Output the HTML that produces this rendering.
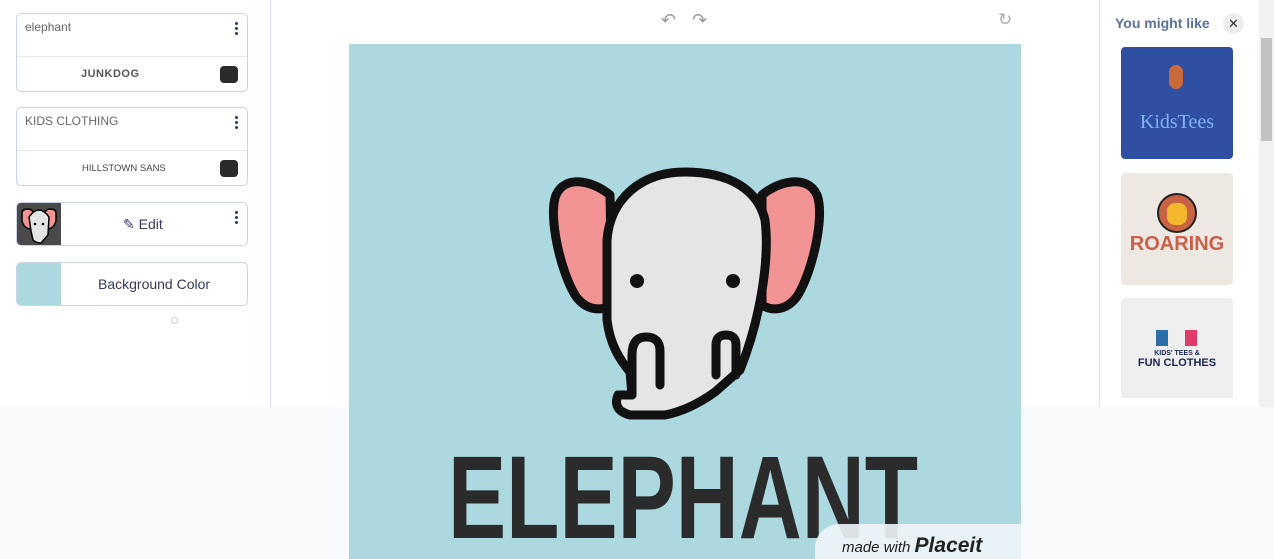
<!DOCTYPE html>
<html><head><style>
*{margin:0;padding:0;box-sizing:border-box}
body{width:1274px;height:559px;overflow:hidden;background:#f8f9fa;font-family:"Liberation Sans",sans-serif;position:relative}
.left{position:absolute;left:0;top:0;width:271px;height:407px;background:#fff;border-right:1px solid #dde3ee}
.card{position:absolute;left:16px;width:232px;border:1px solid #c9d3e3;border-radius:5px;background:#fff}
.dots{position:absolute;right:9px;top:8px;width:3px}
.dots i{display:block;width:3px;height:3px;border-radius:50%;background:#2c3a5a;margin-bottom:2px}
.sw{position:absolute;right:9px;width:18px;height:17px;border-radius:4px;background:#2b2b2b}
.center{position:absolute;left:272px;top:0;width:827px;height:407px;background:#fff}
.canvas{position:absolute;left:349px;top:44px;width:672px;height:515px;background:#acd8df;overflow:hidden}
.right{position:absolute;left:1099px;top:0;width:160px;height:407px;background:#fff;border-left:1px solid #dde3ee}
.thumb{position:absolute;left:21px;width:112px;height:112px;border-radius:4px;overflow:hidden}
</style></head><body>
<div class="left">
 <div class="card" style="top:13px;height:79px">
  <div style="position:absolute;left:8px;top:6px;font-size:12px;color:#666">elephant</div>
  <div class="dots"><i></i><i></i><i></i></div>
  <div style="position:absolute;left:0;right:0;top:42px;border-top:1px solid #e3e8f0"></div>
  <div style="position:absolute;left:64px;top:54px;font-size:11px;font-weight:bold;color:#555;letter-spacing:0.5px">JUNKDOG</div>
  <div class="sw" style="top:52px"></div>
 </div>
 <div class="card" style="top:107px;height:79px">
  <div style="position:absolute;left:8px;top:6px;font-size:12px;color:#666">KIDS CLOTHING</div>
  <div class="dots"><i></i><i></i><i></i></div>
  <div style="position:absolute;left:0;right:0;top:42px;border-top:1px solid #e3e8f0"></div>
  <div style="position:absolute;left:65px;top:55px;font-size:9.5px;color:#444">HILLSTOWN SANS</div>
  <div class="sw" style="top:52px"></div>
 </div>
 <div class="card" style="top:202px;height:44px;overflow:hidden">
  <div style="position:absolute;left:0;top:0;width:44px;height:44px;background:#4a4a4a">
   <svg width="44" height="44" viewBox="0 0 44 44"><path d="M5 10q0-4 6-4 5 0 6 6l-2 14q-8 0-10-8z" fill="#f29494" stroke="#000" stroke-width="1.5"/><path d="M39 10q0-4-6-4-5 0-6 6l2 14q8 0 10-8z" fill="#f29494" stroke="#000" stroke-width="1.5"/><path d="M12 14q10-14 20 0l-1 18-7 8q-5 0-8-3l-2-9z" fill="#e5e5e5" stroke="#000" stroke-width="1.5"/><circle cx="18" cy="21" r="1.3"/><circle cx="26" cy="21" r="1.3"/></svg>
  </div>
  <div style="position:absolute;left:106px;top:13px;font-size:14px;color:#333a5a">✎ Edit</div>
  <div class="dots"><i></i><i></i><i></i></div>
 </div>
 <div class="card" style="top:262px;height:44px;overflow:hidden">
  <div style="position:absolute;left:0;top:0;width:44px;height:44px;background:#acd8df"></div>
  <div style="position:absolute;left:81px;top:13px;font-size:14px;color:#333a5a">Background Color</div>
 </div>
 <div style="position:absolute;left:171px;top:317px;width:7px;height:7px;border-radius:50%;border:1px solid #ccc"></div>
</div>
<div class="center">
 <div style="position:absolute;left:389px;top:10px;font-size:18px;color:#999">↶</div>
 <div style="position:absolute;left:420px;top:10px;font-size:18px;color:#999">↷</div>
 <div style="position:absolute;left:726px;top:10px;font-size:17px;color:#aaa">↻</div>
</div>
<div class="canvas">
<svg width="672" height="515" viewBox="349 44 672 515">
 <g stroke-linecap="round" stroke-linejoin="round" stroke="#111" stroke-width="9">
  <path d="M610 195C592 180 565 175 556 195C548 215 560 270 575 295C585 310 600 312 612 305Z" fill="#f29494"/>
  <path d="M762 195C780 180 808 175 817 195C825 215 813 270 798 295C788 310 773 312 762 305Z" fill="#f29494"/>
  <path d="M685 172C640 172 610 200 607 240L607 320C610 345 620 360 630 372L632 395L618 395Q612 410 630 415L665 415Q690 410 715 392L740 370C760 320 770 260 765 220C758 190 730 172 685 172Z" fill="#e5e5e5"/>
  <path d="M632 395v-40q0-18 14-18t14 14v34" fill="none"/>
  <path d="M716 375v-30q0-10 10-10t10 10v30" fill="none"/>
 </g>
 <circle cx="637" cy="281" r="7" fill="#111"/><circle cx="733" cy="281" r="7" fill="#111"/>
 <text x="448" y="538" font-family="Liberation Sans Narrow, Liberation Sans, sans-serif" font-weight="bold" font-size="118" fill="#2b2b2b" textLength="470" lengthAdjust="spacingAndGlyphs">ELEPHANT</text>
</svg>
 <div style="position:absolute;left:466px;top:480px;width:220px;height:50px;border-radius:24px 0 0 0;background:rgba(240,245,250,0.9)"></div>
 <div style="position:absolute;left:493px;top:490px;font-size:15px;color:#222;font-style:italic">made with <b style="font-size:21px">Placeit</b></div>
</div>
<div class="right">
 <div style="position:absolute;left:15px;top:15px;font-size:14px;font-weight:bold;color:#5a7099">You might like</div>
 <div style="position:absolute;left:123px;top:13px;width:21px;height:21px;border-radius:50%;background:#eee;text-align:center;line-height:21px;font-size:13px;color:#333">✕</div>
 <div class="thumb" style="top:47px;background:#2f4fa3">
  <div style="position:absolute;left:48px;top:18px;width:14px;height:24px;border-radius:7px;background:#c86a3a"></div>
  <div style="position:absolute;width:100%;top:64px;text-align:center;font-family:'Liberation Serif',serif;font-size:20px;color:#7fb6ee">KidsTees</div>
 </div>
 <div class="thumb" style="top:173px;background:#ede9e2">
  <div style="position:absolute;left:36px;top:20px;width:40px;height:40px;border-radius:50%;background:#c86444;border:2px solid #222"></div>
  <div style="position:absolute;left:46px;top:30px;width:20px;height:22px;border-radius:8px;background:#f3b72d"></div>
  <div style="position:absolute;width:100%;top:60px;text-align:center;font-size:20px;font-weight:bold;color:#c9604a">ROARING</div>
 </div>
 <div class="thumb" style="top:298px;height:100px;background:#efefef;border-radius:4px 4px 0 0">
  <div style="position:absolute;left:35px;top:32px;width:12px;height:16px;background:#2b6ea8"></div>
  <div style="position:absolute;left:64px;top:32px;width:12px;height:16px;background:#e03a6b"></div>
  <div style="position:absolute;width:100%;top:52px;text-align:center;font-size:7px;font-weight:bold;color:#1a2550">KIDS' TEES &amp;</div>
  <div style="position:absolute;width:100%;top:59px;text-align:center;font-size:11px;font-weight:bold;color:#1a2550">FUN CLOTHES</div>
 </div>
</div>
<div style="position:absolute;left:1259px;top:0;width:15px;height:407px;background:#f1f1f1"><div style="position:absolute;left:2px;top:38px;width:11px;height:103px;background:#c1c1c1"></div></div>
</body></html>
